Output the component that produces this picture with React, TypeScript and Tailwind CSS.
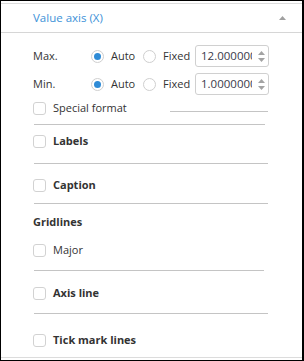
import React from "react";

const font = { fontFamily: '"Open Sans", "Noto Sans", Arial, sans-serif' };

function Radio({ on }: { on?: boolean }) {
  return (
    <span className="flex h-[13px] w-[13px] shrink-0 items-center justify-center rounded-full border border-[#cfcfcf] bg-white">
      {on && <span className="h-[7px] w-[7px] rounded-full bg-[#2f8bd6]" />}
    </span>
  );
}

function Box() {
  return <span className="block h-[13px] w-[13px] shrink-0 rounded-[3px] border border-[#d2d2d2] bg-white" />;
}

function Spin({ value }: { value: string }) {
  return (
    <div className="flex h-[22px] w-[74px] items-center rounded-[3px] border border-[#d0d0d0] bg-white pl-[5px]">
      <span className="w-[51px] overflow-hidden whitespace-nowrap text-[11.5px] text-[#3a3a4a]">{value}</span>
      <span className="ml-[6px] flex flex-col items-center gap-[3px]">
        <svg width="7" height="4" viewBox="0 0 7 4"><path d="M0 4 L3.5 0 L7 4Z" fill="#a3a3a3" /></svg>
        <svg width="7" height="4" viewBox="0 0 7 4"><path d="M0 0 L3.5 4 L7 0Z" fill="#a3a3a3" /></svg>
      </span>
    </div>
  );
}

function RangeRow({ label, value }: { label: string; value: string }) {
  return (
    <div className="flex h-[24px] items-center">
      <span className="w-[58px] text-[11px] text-[#333]">{label}</span>
      <Radio on />
      <span className="ml-[7px] w-[32px] text-[11px] text-[#333]">Auto</span>
      <Radio />
      <span className="ml-[7px] w-[32px] text-[11px] text-[#333]">Fixed</span>
      <Spin value={value} />
    </div>
  );
}

function CheckRow({ label, bold, h = "h-[24px]" }: { label: string; bold?: boolean; h?: string }) {
  return (
    <div className={`flex items-center gap-[7px] ${h}`}>
      <Box />
      <span className={`text-[11px] text-[#333] ${bold ? "font-bold" : ""}`}>{label}</span>
    </div>
  );
}

function Rule({ w = "w-[234px]" }: { w?: string }) {
  return <div className={`ml-px h-px ${w} bg-[#c4c4c4]`} />;
}

export default function App() {
  return (
    <div className="h-[361px] w-[304px] border border-r-2 border-black bg-white" style={font}>
      <div className="mt-[2px] flex h-[355px] flex-col border-y border-[#dcdcdc]">
        <div className="flex h-[29px] shrink-0 items-center justify-between border-b border-[#d6d6d6] pl-[32px] pr-[16px]">
          <span className="text-[11.5px] text-[#3d92d8]">Value axis (X)</span>
          <svg width="7" height="4" viewBox="0 0 7 4"><path d="M0 4 L3.5 0 L7 4Z" fill="#a0a0a0" /></svg>
        </div>
        <div className="flex flex-col pl-[32px]">
          <div className="h-[11px]" />
          <RangeRow label="Max." value="12.000000" />
          <div className="h-[4px]" />
          <RangeRow label="Min." value="1.0000000" />
          <div className="flex h-[24px] items-center">
            <div className="w-[137px]">
              <CheckRow label="Special format" />
            </div>
            <div className="mt-[6px] h-px w-[98px] bg-[#c4c4c4]" />
          </div>
          <div className="h-[4px]" />
          <Rule w="w-[231px]" />
          <div className="h-[4px]" />
          <CheckRow label="Labels" bold />
          <div className="h-[10px]" />
          <Rule />
          <div className="h-[9px]" />
          <CheckRow label="Caption" bold />
          <div className="h-[6px]" />
          <Rule />
          <div className="flex h-[37px] items-center">
            <span className="text-[11px] font-bold text-[#333]">Gridlines</span>
          </div>
          <CheckRow label="Major" h="h-[18px]" />
          <div className="h-[11px]" />
          <Rule w="w-[230px]" />
          <div className="h-[10px]" />
          <CheckRow label="Axis line" bold />
          <div className="h-[8px]" />
          <Rule />
          <div className="h-[14px]" />
          <CheckRow label="Tick mark lines" bold />
        </div>
      </div>
    </div>
  );
}
